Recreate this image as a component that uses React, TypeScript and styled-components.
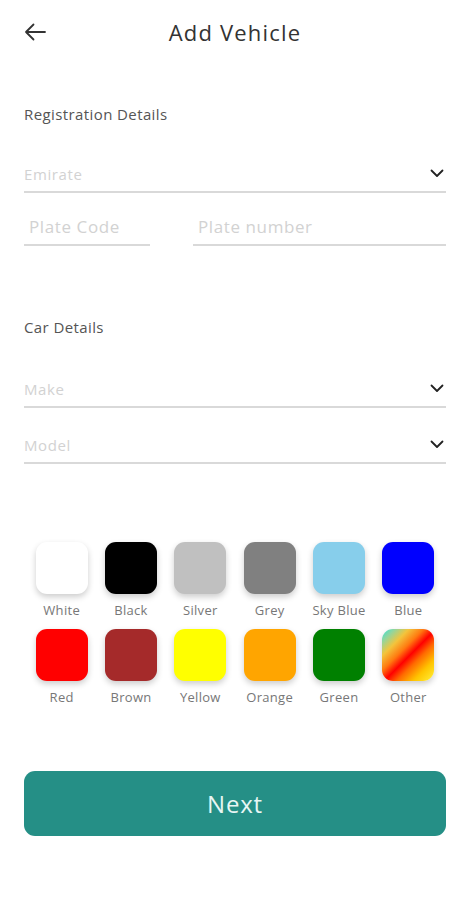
import styled, { createGlobalStyle } from 'styled-components';

const GlobalStyle = createGlobalStyle`
  body {
    margin: 0;
    background: #fff;
    font-family: "Open Sans", "Liberation Sans", sans-serif;
  }
`;

interface Swatch {
  name: string;
  fill: string;
}

const colours: Swatch[] = [
  { name: 'White', fill: '#ffffff' },
  { name: 'Black', fill: '#000000' },
  { name: 'Silver', fill: '#c0c0c0' },
  { name: 'Grey', fill: '#808080' },
  { name: 'Sky Blue', fill: '#87ceeb' },
  { name: 'Blue', fill: '#0000ff' },
  { name: 'Red', fill: '#ff0000' },
  { name: 'Brown', fill: '#a52a2a' },
  { name: 'Yellow', fill: '#ffff00' },
  { name: 'Orange', fill: '#ffa500' },
  { name: 'Green', fill: '#008000' },
  {
    name: 'Other',
    fill: 'linear-gradient(135deg, #30e0d8 0%, #8fd6a0 12%, #f3c43c 26%, #ff7a10 40%, #ff0000 52%, #ff6a00 64%, #ffc400 80%, #fff23a 100%)',
  },
];

const Chevron = () => (
  <svg width="14" height="9" viewBox="0 0 14 9" fill="none">
    <path d="M1.5 1.5 L7 7 L12.5 1.5" stroke="#222" strokeWidth="1.8" strokeLinecap="round" strokeLinejoin="round" />
  </svg>
);

export default function App() {
  return (
    <>
      <GlobalStyle />
      <Page>
        <Header>
          <BackButton aria-label="Back">
            <svg width="22" height="18" viewBox="0 0 22 18" fill="none">
              <path d="M21 9 H2 M9.5 1.5 L2 9 L9.5 16.5" stroke="#333" strokeWidth="1.8" strokeLinecap="round" strokeLinejoin="round" />
            </svg>
          </BackButton>
          <Title>Add Vehicle</Title>
        </Header>

        <SectionTitle $top={40}>Registration Details</SectionTitle>
        <Select $top={32}>
          <Placeholder>Emirate</Placeholder>
          <Chevron />
        </Select>
        <PlateRow>
          <Input $width={126}>
            <Placeholder $inset>Plate Code</Placeholder>
          </Input>
          <Input $width={253}>
            <Placeholder $inset>Plate number</Placeholder>
          </Input>
        </PlateRow>

        <SectionTitle $top={71}>Car Details</SectionTitle>
        <Select $top={34}>
          <Placeholder>Make</Placeholder>
          <Chevron />
        </Select>
        <Select $top={19}>
          <Placeholder>Model</Placeholder>
          <Chevron />
        </Select>

        <ColourGrid>
          {colours.map(c => (
            <ColourItem key={c.name}>
              <ColourBox style={{ background: c.fill }} />
              <ColourLabel>{c.name}</ColourLabel>
            </ColourItem>
          ))}
        </ColourGrid>

        <NextButton>Next</NextButton>
      </Page>
    </>
  );
}

const Page = styled.div`
  width: 469px;
  height: 900px;
  box-sizing: border-box;
  padding: 0 23px 0 24px;
  display: flex;
  flex-direction: column;
  background: #fff;
`;

const Header = styled.div`
  height: 64px;
  display: flex;
  align-items: center;
  position: relative;
`;

const BackButton = styled.button`
  border: none;
  background: none;
  padding: 0;
  display: flex;
  align-items: center;
  cursor: pointer;
`;

const Title = styled.h1`
  position: absolute;
  left: 0;
  right: 0;
  margin: 0;
  text-align: center;
  font-size: 22px;
  font-weight: 400;
  letter-spacing: 1.2px;
  color: #333;
  pointer-events: none;
`;

const SectionTitle = styled.div<{ $top: number }>`
  margin-top: ${p => p.$top}px;
  height: 20px;
  line-height: 20px;
  font-size: 15px;
  color: #555;
  letter-spacing: 0.4px;
`;

const Select = styled.div<{ $top: number }>`
  margin-top: ${p => p.$top}px;
  height: 37px;
  display: flex;
  align-items: center;
  justify-content: space-between;
  padding-right: 2px;
  border-bottom: 2px solid #d9d9d9;
  box-sizing: border-box;
`;

const PlateRow = styled.div`
  margin-top: 16px;
  display: flex;
  justify-content: space-between;
`;

const Input = styled.div<{ $width: number }>`
  width: ${p => p.$width}px;
  height: 37px;
  display: flex;
  align-items: center;
  border-bottom: 2px solid #d9d9d9;
  box-sizing: border-box;
`;

const Placeholder = styled.span<{ $inset?: boolean }>`
  padding-left: ${p => (p.$inset ? 5 : 0)}px;
  font-size: ${p => (p.$inset ? 17 : 15)}px;
  color: #d2d2d2;
  letter-spacing: 0.6px;
`;

const ColourGrid = styled.div`
  margin-top: 78px;
  display: grid;
  grid-template-columns: repeat(6, 1fr);
  row-gap: 10px;
  padding: 0 3px;
`;

const ColourItem = styled.div`
  display: flex;
  flex-direction: column;
  align-items: center;
`;

const ColourBox = styled.div`
  width: 52px;
  height: 52px;
  border-radius: 11px;
  box-shadow: 0 3px 6px rgba(0, 0, 0, 0.2);
`;

const ColourLabel = styled.span`
  margin-top: 7px;
  font-size: 13px;
  color: #777;
  letter-spacing: 0.3px;
  white-space: nowrap;
`;

const NextButton = styled.button`
  margin-top: 65px;
  height: 65px;
  width: 100%;
  border: none;
  border-radius: 11px;
  background: #258f86;
  color: #e8f6f4;
  font-family: "Open Sans", "Liberation Sans", sans-serif;
  font-size: 24px;
  letter-spacing: 0.8px;
  cursor: pointer;
`;
